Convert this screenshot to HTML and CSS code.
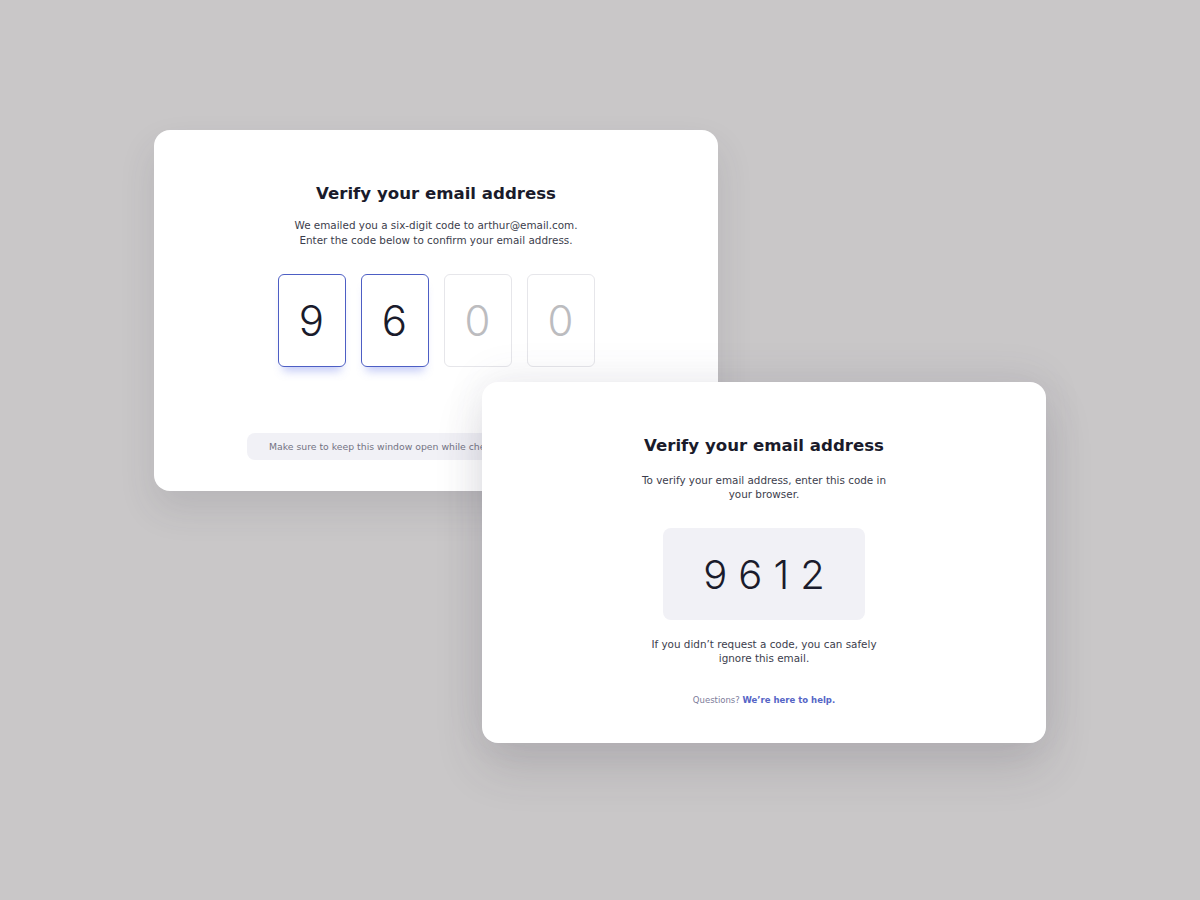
FILE: index.html
```html
<!DOCTYPE html>
<html lang="en">
<head>
<meta charset="utf-8">
<title>Verify your email address</title>
<link rel="stylesheet" href="styles.css">
</head>
<body>
<main class="desk">
  <section class="card card-entry">
    <h1 class="title">Verify your email address</h1>
    <p class="lead">We emailed you a six-digit code to arthur@email.com.<br>Enter the code below to confirm your email address.</p>
    <div class="digits">
      <div class="digit filled">9</div>
      <div class="digit filled">6</div>
      <div class="digit empty">0</div>
      <div class="digit empty">0</div>
    </div>
    <div class="note">Make sure to keep this window open while checking your inbox.</div>
  </section>

  <section class="card card-mail">
    <h1 class="title">Verify your email address</h1>
    <p class="lead narrow">To verify your email address, enter this code in<br>your browser.</p>
    <div class="code">9612</div>
    <p class="lead narrow ignore">If you didn’t request a code, you can safely<br>ignore this email.</p>
    <p class="help">Questions? <a href="#" class="help-link">We’re here to help.</a></p>
  </section>
</main>
</body>
</html>
```

FILE: styles.css
```css
* { box-sizing: border-box; }

html, body {
  margin: 0;
  height: 100%;
}

body {
  background: #c9c7c8;
  font-family: "DejaVu Sans", "Open Sans", sans-serif;
  color: #1b1c2c;
}

.desk {
  position: relative;
  width: 1200px;
  height: 900px;
  overflow: hidden;
}

/* the two windows sit freely on the canvas */
.card {
  position: absolute;
  width: 564px;
  height: 361px;
  background: #ffffff;
  border-radius: 16px;
  display: flex;
  flex-direction: column;
  align-items: center;
  padding-top: 52px;
}

.card-entry {
  left: 154px;
  top: 130px;
  box-shadow: 0 18px 36px rgba(60, 58, 70, 0.12);
}

.card-mail {
  left: 482px;
  top: 382px;
  box-shadow: 0 -6px 40px rgba(80, 80, 110, 0.08), 0 24px 48px rgba(60, 58, 70, 0.16);
}

.title {
  margin: 0;
  font-size: 16.6px;
  line-height: 24px;
  font-weight: 700;
  color: #1a1b2b;
}

.lead {
  margin: 12px 0 0;
  font-size: 10.4px;
  line-height: 15px;
  text-align: center;
  color: #3c3d4c;
}

.narrow {
  margin-top: 15px;
  line-height: 14px;
}

.digits {
  display: flex;
  gap: 15px;
  margin-top: 26px;
}

.digit {
  width: 68px;
  height: 93px;
  border-radius: 6px;
  display: flex;
  align-items: center;
  justify-content: center;
  font-family: "Inter", "Roboto", sans-serif;
  font-weight: 300;
  font-size: 42px;
}

.digit.filled {
  border: 1.5px solid #4d5ec4;
  color: #1a1b2b;
  box-shadow: 0 9px 10px -5px rgba(80, 100, 230, 0.35);
}

.digit.empty {
  border: 1.5px solid #e6e6ea;
  color: #bcbcbf;
}

.note {
  margin-top: 66px;
  width: 378px;
  height: 27px;
  border-radius: 8px;
  background: #f1f1f6;
  display: flex;
  align-items: center;
  padding-left: 22px;
  font-size: 9.3px;
  color: #737383;
  white-space: nowrap;
  overflow: hidden;
}

.code {
  margin-top: 27px;
  width: 202px;
  height: 92px;
  border-radius: 8px;
  background: #f1f1f6;
  display: flex;
  align-items: center;
  justify-content: center;
  font-family: "Inter", "Roboto", sans-serif;
  font-weight: 300;
  font-size: 40px;
  letter-spacing: 11px;
  padding-left: 11px;
  color: #1a1b2b;
}

.ignore {
  margin-top: 17px;
}

.help {
  margin: 28px 0 0;
  font-size: 8.5px;
  line-height: 14px;
  color: #7c7c9a;
}

.help-link {
  color: #5565c6;
  font-weight: 700;
  text-decoration: none;
}
```
